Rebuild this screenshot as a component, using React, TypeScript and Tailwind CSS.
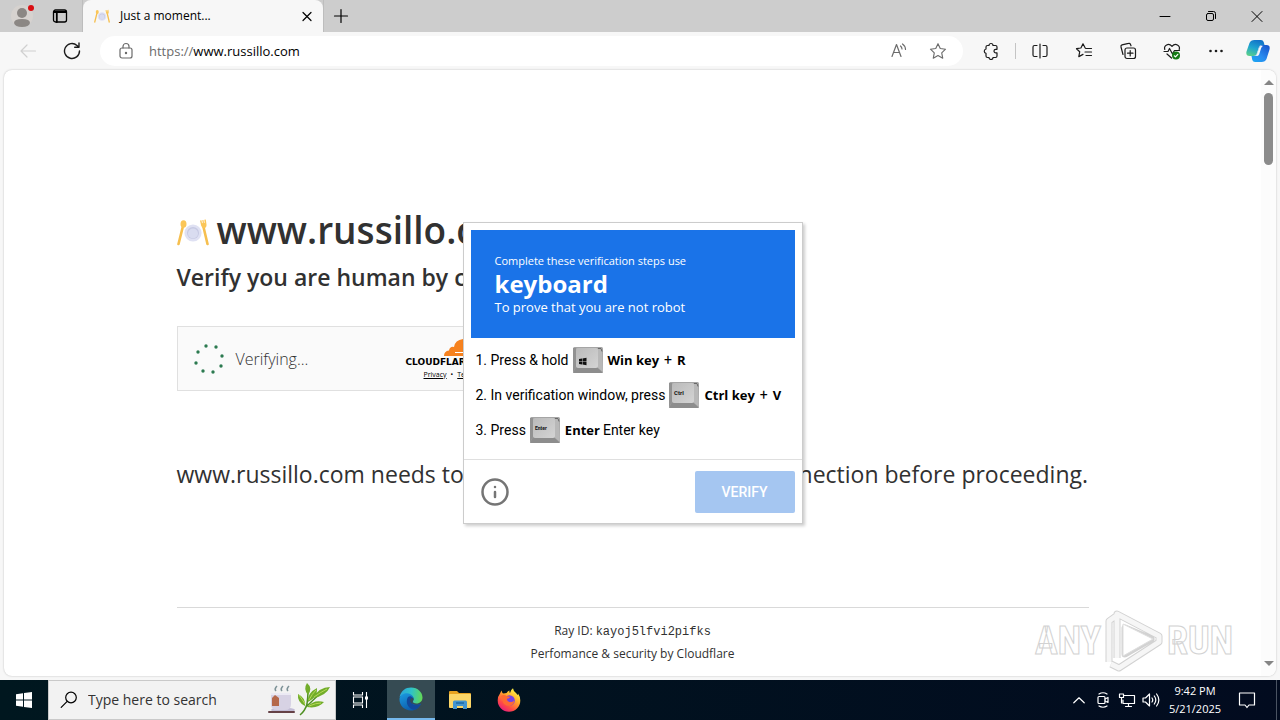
import type { ReactNode } from "react";
import { Info } from "lucide-react";

const stroke = {
  fill: "none",
  stroke: "currentColor",
  strokeWidth: 1.2,
  strokeLinecap: "round" as const,
  strokeLinejoin: "round" as const,
};

function IconButton({ label, className, children }: { label: string; className: string; children: ReactNode }) {
  return (
    <button type="button" aria-label={label} className={`flex shrink-0 items-center justify-center ${className}`}>
      {children}
    </button>
  );
}

function PlateIcon({ className }: { className: string }) {
  return (
    <svg viewBox="0 0 32 32" className={className} aria-hidden="true">
      <circle cx="16" cy="17" r="8.600" fill="#dfe1f3" />
      <circle cx="16" cy="17" r="6" fill="#c6c9e3" />
      <circle cx="16" cy="17.500" r="5" fill="#d9dcf0" />
      <path d="M6 10 1.500 28" stroke="#f6bf4f" strokeWidth="2.600" strokeLinecap="round" />
      <ellipse cx="6.500" cy="8" rx="3" ry="3.800" fill="#fbc658" />
      <path d="M26.500 11 30.500 28" stroke="#f6bf4f" strokeWidth="2.600" strokeLinecap="round" />
      <path d="m23 4.500 1.500-.3.5 3 .7-.1-.4-3 1.200-.2.500 3 .7-.1-.4-3 1.500-.3.700 5q.3 3-2.200 3.600-2.500.2-3.200-2.600Z" fill="#fbc658" />
    </svg>
  );
}

function TabStrip() {
  return (
    <div className="flex h-8 shrink-0 bg-[#cdcdcd]">
      <div className="flex w-[83px] shrink-0 items-center gap-1 border-r border-[#bdbdbd] pl-2">
        <IconButton label="Profile" className="h-7 w-8">
          <svg viewBox="0 0 32 28" className="h-7 w-8">
            <circle cx="14" cy="14" r="11" fill="#d6d2cf" />
            <circle cx="14" cy="11" r="5" fill="#8b8784" />
            <path d="M6 21q0-4 8-4t8 4q-1 4-8 4t-8-4Z" fill="#8b8784" />
            <circle cx="23" cy="6" r="3" fill="#d90e12" />
          </svg>
        </IconButton>
        <IconButton label="Tab actions" className="h-7 w-8">
          <svg viewBox="0 0 16 16" className="size-4" {...stroke} strokeWidth={1.3}>
            <rect x="1.500" y="2" width="13" height="12" rx="2" />
            <path d="M2 4h12M4.800 5v9" strokeWidth="1.800" />
          </svg>
        </IconButton>
      </div>
      <div className="flex w-60 shrink-0 items-center rounded-t-lg bg-[#f7f7f7] pr-2 pl-[11px]">
        <PlateIcon className="size-4" />
        <span className="ml-[10px] grow text-xs text-black">Just a moment...</span>
        <IconButton label="Close tab" className="size-4">
          <svg viewBox="0 0 16 16" className="size-4" {...stroke}>
            <path d="m4 4.500 8 8m0-8-8 8" />
          </svg>
        </IconButton>
      </div>
      <IconButton label="New tab" className="h-8 w-[34px] border-l border-[#bdbdbd]">
        <svg viewBox="0 0 16 16" className="size-4" {...stroke}>
          <path d="M1.500 8h13M8 1.500v13" />
        </svg>
      </IconButton>
      <div className="grow" />
      <IconButton label="Minimize" className="h-8 w-[46px]">
        <svg viewBox="0 0 12 12" className="size-3" {...stroke} strokeWidth={1}>
          <path d="M1 6.500h10" />
        </svg>
      </IconButton>
      <IconButton label="Restore" className="h-8 w-[46px]">
        <svg viewBox="0 0 12 12" className="size-3" {...stroke} strokeWidth={1}>
          <rect x="1.500" y="3.500" width="7" height="7" rx="1.500" />
          <path d="M3.500 1.500h5q2 0 2 2v5" />
        </svg>
      </IconButton>
      <IconButton label="Close" className="h-8 w-[46px]">
        <svg viewBox="0 0 12 12" className="size-3" {...stroke} strokeWidth={1}>
          <path d="m1 1.500 10 10m0-10-10 10" />
        </svg>
      </IconButton>
    </div>
  );
}

const starPath = "m8 1.500 2 4.300 4.700.6-3.400 3.300.9 4.700L8 12.100l-4.200 2.300.9-4.700L1.300 6.400 6 5.800Z";

function Toolbar() {
  return (
    <div className="flex h-[38px] shrink-0 items-center bg-[#f7f7f7] pl-[6px] text-[#1b1b1b]">
      <IconButton label="Back" className="h-8 w-11 text-[#d0d0d0]">
        <svg viewBox="0 0 18 18" className="size-[18px]" {...stroke}>
          <path d="M16.500 9H2M8 3 2 9l6 6" />
        </svg>
      </IconButton>
      <IconButton label="Refresh" className="h-8 w-11">
        <svg viewBox="0 0 18 18" className="size-[18px]" {...stroke} strokeWidth={1.4}>
          <path d="M16.500 9A7.500 7.500 0 1 1 14 3.400L15.800 5M16 1v4.300h-4.300" />
        </svg>
      </IconButton>
      <div className="ml-[6px] flex h-[30px] grow items-center rounded-full bg-white pr-4 pl-[18px] text-[#6b6b6b]">
        <svg viewBox="0 0 16 18" className="h-[18px] w-4 shrink-0" {...stroke}>
          <rect x="2" y="6" width="12" height="10" rx="2" />
          <path d="M5 6V4.500a3 3 0 0 1 6 0V6" />
          <circle cx="8" cy="11" r=".6" fill="currentColor" />
        </svg>
        <a href="https://www.russillo.com" className="ml-[15px] grow text-[13px] leading-5">
          https://<span className="text-black">www.russillo.com</span>
        </a>
        <IconButton label="Read aloud" className="size-[18px]">
          <svg viewBox="0 0 18 18" className="size-[18px]" {...stroke}>
            <path d="m2 14.500 4.500-12 4.500 12M3.500 10.500h6M10.500 4a4 4 0 0 1 1.500 3M12.500 2a7 7 0 0 1 3 5.500" />
          </svg>
        </IconButton>
        <IconButton label="Favorite" className="ml-[21px] size-[18px]">
          <svg viewBox="0 0 16 16" className="size-[18px]" {...stroke} strokeWidth={1}>
            <path d={starPath} />
          </svg>
        </IconButton>
      </div>
      <IconButton label="Extensions" className="ml-4 h-8 w-6">
        <svg viewBox="0 0 18 18" className="size-[18px]" {...stroke}>
          <path d="M5.500 3.500H7a2 2 0 0 1 4 0h2.500Q15 3.500 15 5v2.300h-1.200a1.800 1.800 0 0 0 0 3.600H15V14q0 1.500-1.500 1.500H11a2 2 0 0 1-4 0H5.500Q4 15.500 4 14v-2.700a2.200 2.200 0 0 1 0-4.300V5q0-1.500 1.500-1.500Z" />
        </svg>
      </IconButton>
      <div className="mr-2 ml-3 h-4 w-px bg-[#c4c4c4]" />
      <IconButton label="Split screen" className="h-8 w-8">
        <svg viewBox="0 0 18 18" className="size-[18px]" {...stroke}>
          <path d="M6 3.500H3.500q-1.500 0-1.500 1.500v8q0 1.500 1.500 1.500H6M12 3.500h2.500Q16 3.500 16 5v8q0 1.500-1.500 1.500H12M9 2v14" />
        </svg>
      </IconButton>
      <IconButton label="Favorites" className="ml-3 h-8 w-8">
        <svg viewBox="0 0 18 18" className="size-[18px]" {...stroke}>
          <path d="M10.200 6 8 1.800 5.900 6 1.500 6.700l3.200 3.100-.9 4.800 4.200-2.200M11 6.500h5.500M10 10h6.500M11 13.500h5.500" />
        </svg>
      </IconButton>
      <IconButton label="Collections" className="ml-3 h-8 w-8">
        <svg viewBox="0 0 18 18" className="size-[18px]" {...stroke}>
          <rect x="6" y="6" width="10.500" height="10.500" rx="2" />
          <path d="M11.200 8.500v5.500M8.500 11.200H14M4 12.500 2 5q-.4-1.600 1-2.100l6.500-1.500q1.500-.4 2 1l.5 1.400" />
        </svg>
      </IconButton>
      <IconButton label="Browser essentials" className="ml-3 h-8 w-8">
        <svg viewBox="0 0 18 18" className="size-[18px]" {...stroke}>
          <path d="M1.800 7.500C.5 3.500 5.500.5 9 4.300c3.500-3.800 8.500-.8 7.200 3.200M1 9.500h4l1.500-3 3 5.500 2-3.500h5M4 12l4.500 4" />
          <circle cx="13" cy="13.500" r="4" fill="#167a16" stroke="none" />
          <path d="m11.300 13.800 1.200 1.100 2.300-2.600" stroke="#fff" />
        </svg>
      </IconButton>
      <IconButton label="Settings and more" className="ml-3 h-8 w-8">
        <svg viewBox="0 0 18 18" className="size-[18px]">
          <g fill="currentColor">
            <circle cx="3.500" cy="9" r="1.300" />
            <circle cx="9" cy="9" r="1.300" />
            <circle cx="14.500" cy="9" r="1.300" />
          </g>
        </svg>
      </IconButton>
      <IconButton label="Copilot" className="mr-2 ml-3 h-8 w-7">
        <svg viewBox="0 0 24 24" className="size-6">
          <defs>
            <linearGradient id="cpA" x1="0.6" y1="0" x2="0.2" y2="1">
              <stop offset="0" stopColor="#1272c8" />
              <stop offset="0.5" stopColor="#1fa5d0" />
              <stop offset="1" stopColor="#5bd08a" />
            </linearGradient>
            <linearGradient id="cpB" x1="1" y1="0" x2="0.1" y2="1">
              <stop offset="0" stopColor="#164fc8" />
              <stop offset="0.6" stopColor="#2a8cf0" />
              <stop offset="1" stopColor="#1ba6f2" />
            </linearGradient>
          </defs>
          <path d="M8.500 1H15q2 0 2.700 2l.8 3h-2.800q-2 0-2.800 2.200L11 14q-.8 3-3.600 3H3.500Q-.5 17 .5 12.500L3.500 4Q4.700 1 8.500 1Z" fill="url(#cpA)" />
          <path d="M15.500 23H9q-2 0-2.700-2l-.8-4h2.800q2 0 2.800-2.200L13 9q.8-3 3.600-3h3.900q4 0 3 4.500l-3 9.500q-1.200 3-5 3Z" fill="url(#cpB)" />
          <path d="m13 9-2.200 6.500q-.6 1.500-2 1.500h2.400q1.300 0 2-1.800l2-6.200q.8-1.800 2-2-3.300-1-4.200 2Z" fill="#f7f7f7" />
        </svg>
      </IconButton>
    </div>
  );
}

function Key({ children }: { children: ReactNode }) {
  return (
    <svg viewBox="0 0 30 26" className="mr-[5px] ml-1 h-[26px] w-[30px] shrink-0" aria-hidden="true">
      <defs>
        <linearGradient id="keyTop" x1="0" y1="0" x2="1" y2="1">
          <stop offset="0" stopColor="#bababa" />
          <stop offset="1" stopColor="#d4d4d4" />
        </linearGradient>
      </defs>
      <rect width="30" height="26" rx="1.500" fill="#a5a5a5" />
      <path d="M0 26 3 20h21l6 6Z" fill="#8d8d8d" />
      <path d="m24 2 5-1 1 24-6-5Z" fill="#b8b8b8" />
      <path d="M0 1 3 1v19l-3 5Z" fill="#929292" />
      <rect x="3" y="1" width="22" height="20" rx="2" fill="url(#keyTop)" />
      <path d="M25 1.500h3l1 3" fill="none" stroke="#696969" />
      {children}
    </svg>
  );
}

function Strong({ children }: { children: ReactNode }) {
  return <b className="font-['Open_Sans',sans-serif] text-[13px] font-bold">{children}</b>;
}

function VerifyDialog() {
  return (
    <section
      role="dialog"
      aria-label="Verification steps"
      className="w-[340px] border border-[#cccccc] bg-white shadow-[2px_2px_3px_rgba(0,0,0,0.2)]"
    >
      <div className="m-[7px] mb-0 flex h-[108px] flex-col justify-center bg-[#1a73e8] px-6 text-white">
        <p className="text-[11px] leading-4">Complete these verification steps use</p>
        <p className="text-2xl leading-[30px] font-bold">keyboard</p>
        <p className="text-[13px] leading-4">To prove that you are not robot</p>
      </div>
      <ol className="flex flex-col gap-[9px] px-[12px] pt-[9px] pb-4 font-['Roboto',sans-serif] text-sm text-black">
        <li className="flex h-[26px] items-center">
          <span>1. Press &amp; hold</span>
          <Key>
            <path d="m6 12 3-.5v3H6Zm3.500-.6 4-.6v3.700h-4ZM6 15h3v2.500L6 17Zm3.500 0h4v3.200l-4-.6Z" fill="#111" />
          </Key>
          <Strong>Win key</Strong>
          <span className="mx-[5px]">+</span>
          <Strong>R</Strong>
        </li>
        <li className="flex h-[26px] items-center">
          <span>2. In verification window, press</span>
          <Key>
            <text x="5" y="13" fontSize="6" fontWeight="700" fill="#111">Ctrl</text>
          </Key>
          <Strong>Ctrl key</Strong>
          <span className="mx-[5px]">+</span>
          <Strong>V</Strong>
        </li>
        <li className="flex h-[26px] items-center">
          <span>3. Press</span>
          <Key>
            <text x="5" y="13" fontSize="5" fontWeight="700" fill="#111">Enter</text>
          </Key>
          <Strong>Enter</Strong>
          <span className="ml-[3px]">Enter key</span>
        </li>
      </ol>
      <div className="flex items-center justify-between border-t border-[#dfdfdf] pt-[11px] pr-[7px] pb-[10px] pl-4">
        <button type="button" aria-label="Information" className="text-[#757575]">
          <Info className="size-[30px]" strokeWidth={2} />
        </button>
        <button type="button" className="h-[42px] w-[100px] rounded-[2px] bg-[#a5c6f1] font-['Roboto',sans-serif] text-sm font-medium text-white">
          VERIFY
        </button>
      </div>
    </section>
  );
}

function Spinner() {
  const dots = [[12, 2], [22, 3], [28, 12], [27, 22], [19, 28], [9, 27], [2, 19], [4, 8]];
  return (
    <svg viewBox="0 0 30 30" className="size-[30px]" aria-hidden="true">
      {dots.map(([x, y]) => (
        <circle key={`${x}-${y}`} cx={x} cy={y} r="1.700" fill="#2c7a50" />
      ))}
    </svg>
  );
}

function Challenge() {
  return (
    <main className="mx-auto w-full max-w-[912px] pt-[135px] text-[#313131]">
      <h1 className="flex items-center gap-2 text-[37px] leading-[50px] font-semibold">
        <PlateIcon className="mt-1 size-8" />
        www.russillo.com
      </h1>
      <p className="mt-1 text-[23px] leading-9 font-semibold">Verify you are human by completing the action below.</p>
      <div className="mt-[31px] flex h-[65px] w-80 items-center border border-[#e0e0e0] bg-[#fafafa] pr-4 pl-4">
        <Spinner />
        <span className="ml-3 grow text-base font-light">Verifying...</span>
        <div className="flex w-[74px] flex-col items-start text-black">
          <svg viewBox="0 0 40 18" className="ml-[38px] h-[18px] w-10" aria-hidden="true">
            <path d="M0 17q0-5 5-5.500Q6 7 10 8q1-7 9-8 9 0 10 8l-2 9Z" fill="#f6821f" />
            <path d="M29 8q9-1 11 9H27Z" fill="#fbad41" />
            <path d="M11 13.500h14" stroke="#fff" />
          </svg>
          <span className="font-['DejaVu_Sans',sans-serif] text-[9px] leading-[10px] font-bold">CLOUDFLARE</span>
          <span className="mt-[3px] ml-[18px] flex gap-1 text-[7px] leading-[9px]">
            <a href="#privacy" className="underline">Privacy</a>•<a href="#terms" className="underline">Terms</a>
          </span>
        </div>
      </div>
      <p className="mt-[65px] text-[23px] leading-9">
        www.russillo.com needs to review the security of your connection before proceeding.
      </p>
      <footer className="mt-[115px] border-t border-[#d9d9d9] pt-3 text-center text-xs leading-[22px]">
        <p>
          Ray ID: <code className="font-['Liberation_Mono',monospace]">kayoj5lfvi2pifks</code>
        </p>
        <p>Perfomance &amp; security by Cloudflare</p>
      </footer>
    </main>
  );
}

function Watermark() {
  return (
    <div className="pointer-events-none absolute right-[43px] bottom-1 flex items-center gap-1 font-['Liberation_Sans_Narrow','Roboto_Condensed',sans-serif] text-[38px] leading-[62px] font-bold text-white [-webkit-text-stroke:1px_#d2d2d2]">
      <span>ANY</span>
      <svg viewBox="0 0 58 62" className="h-[62px] w-[58px]" fill="none" strokeLinejoin="round" aria-hidden="true">
        <g stroke="#d2d2d2" strokeWidth="7">
          <path d="M4 52V11l7-5M12 48V4l42 22v6L14 58l-8-4M20 18v26l26-15Z" />
        </g>
        <g stroke="#f6f6f6" strokeWidth="5">
          <path d="M4 52V11l7-5M12 48V4l42 22v6L14 58l-8-4" />
        </g>
        <path d="M18 14v32l30-17Z" fill="#fff" stroke="#dedede" />
      </svg>
      <span>RUN</span>
    </div>
  );
}

function Scrollbar() {
  return (
    <div className="flex w-[15px] shrink-0 flex-col items-center justify-between bg-[#fcfcfc] py-[10px]" aria-hidden="true">
      <div className="flex flex-col items-center gap-2">
        <svg viewBox="0 0 10 5" className="h-[5px] w-[10px]" fill="#858585">
          <path d="M0 5 5 0l5 5Z" />
        </svg>
        <div className="h-[72px] w-[9px] rounded-full bg-[#8b8b8b]" />
      </div>
      <svg viewBox="0 0 10 5" className="h-[5px] w-[10px]" fill="#858585">
        <path d="m0 0 5 5 5-5Z" />
      </svg>
    </div>
  );
}

function EdgeIcon() {
  return (
    <svg viewBox="0 0 24 24" className="size-6" aria-hidden="true">
      <defs>
        <linearGradient id="edA" x1="0" y1="0.3" x2="1" y2="0.4">
          <stop offset="0" stopColor="#2aa5dc" />
          <stop offset="0.5" stopColor="#2fc2c8" />
          <stop offset="1" stopColor="#62d957" />
        </linearGradient>
        <linearGradient id="edB" x1="0" y1="0" x2="0.6" y2="1">
          <stop offset="0" stopColor="#1b9de2" />
          <stop offset="1" stopColor="#0c58a8" />
        </linearGradient>
      </defs>
      <path d="M.6 10C2 3.800 6.500.5 12 .5 19 .5 23.500 5.600 23.500 10.500c0 3.600-2.600 6-6 6-2.500 0-4.200-1-3.400-2.500C16 11.500 13.500 8 9.500 8 5 8 1.500 9 .6 10Z" fill="url(#edA)" />
      <path d="M.5 12C.7 8.500 4 6 8 6.200c4.500.2 7.400 3.600 6.300 6.600-.5 1.200-1 1-1 2.400 0 2.200 3.500 3.700 8.700 1.500-1.800 4-5.500 6.800-10 6.800C5.500 23.500.2 18.500.5 12Z" fill="url(#edB)" />
      <path d="M8 12.500c.5-2.500 2.500-3.800 4.500-2.800 1.800 1 2.200 2.400 1.400 4-2.400 3.500 2.500 5.700 8 3-1.500 3.500-4.500 5.600-7 6-4.500-.5-8-5.200-6.900-10.200Z" fill="#12489b" />
      <path d="M12 11.500q2.500-1.500 2.300 1.200-1.800 2.800.2 4.300-2.700-.3-3.300-2.500-.3-2 .8-3Z" fill="#364b53" />
    </svg>
  );
}

function FolderIcon() {
  return (
    <svg viewBox="0 0 22 20" className="h-5 w-[22px]" aria-hidden="true">
      <path d="M0 2q0-1 1-1h7l2 2h11q1 0 1 1v4H0Z" fill="#e8a320" />
      <rect y="4" width="22" height="14" rx="1" fill="#fcd667" />
      <path d="M4 19v-7q0-1.500 1.500-1.500h11Q18 10.500 18 12v7h-4v-3H8v3Z" fill="#4495cf" />
      <path d="M7 12h8v2H7Z" fill="#2774ae" />
    </svg>
  );
}

function FirefoxIcon() {
  return (
    <svg viewBox="0 0 24 24" className="size-6" aria-hidden="true">
      <defs>
        <linearGradient id="ffA" x1="0.8" y1="0.1" x2="0.2" y2="1">
          <stop offset="0" stopColor="#fff044" />
          <stop offset="0.35" stopColor="#ffa62b" />
          <stop offset="0.7" stopColor="#ff4a45" />
          <stop offset="1" stopColor="#e31587" />
        </linearGradient>
      </defs>
      <path d="M3 5.500q1-2 1.500-3Q5 5 6.500 5.500 8 5 9.500 5 11 2.500 12.500 2.500q-.4 1.500.5 2.500 1-3.500 3-4.700.4 2.700 2.500 4.200Q20 5.500 20.300 7q.8-.1.700-1.500 2.300 3 2.300 7A11.300 11.300 0 0 1 .7 12.500Q.6 8.500 3 5.500Z" fill="url(#ffA)" />
      <circle cx="12.500" cy="12.500" r="5.300" fill="#7542e5" />
      <path d="M4 8q3-2 6 .2 2 .3 3 .5-.5 1.800-3 2-.4 2.300 2.500 3.300 3.500.5 4.500-1.500.5 4.500-4 5.500Q6 18 5.500 12Z" fill="#ff6a32" />
    </svg>
  );
}

function Taskbar() {
  return (
    <footer className="flex h-10 shrink-0 bg-linear-to-r from-[#00171f] to-[#020b1f] text-white">
      <IconButton label="Start" className="h-10 w-12">
        <svg viewBox="0 0 16 16" className="size-4" fill="#fff">
          <path d="m0 2.200 7-1V7.500H0ZM8 1l8-1v7.500H8ZM0 8.500h7v6.300l-7-1ZM8 8.500h8V16l-8-1Z" />
        </svg>
      </IconButton>
      <label className="flex w-72 shrink-0 items-center border border-[#c9c9c9] bg-[#f2f2f2] pr-1 pl-[11px] text-black">
        <svg viewBox="0 0 18 18" className="size-[18px] shrink-0" {...stroke}>
          <circle cx="11" cy="6.500" r="5.300" />
          <path d="m7.200 10.300-6 6" />
        </svg>
        <input
          type="text"
          aria-label="Search"
          placeholder="Type here to search"
          className="ml-[10px] w-0 min-w-0 grow bg-transparent text-sm text-black outline-none placeholder:text-[#333333]"
        />
        <svg viewBox="0 0 64 34" className="h-[34px] w-16 shrink-0" aria-hidden="true">
          <path d="M9 8q-2-2 1-5M15 8q-2-2 1-5M21 8q-2-2 1-5" fill="none" stroke="#7d9297" strokeWidth="1.600" />
          <ellipse cx="16" cy="27" rx="12" ry="2.500" fill="#c3bdd6" />
          <path d="M4 10h20v11q0 6-6 6h-8q-6 0-6-6Z" fill="#d7d2e4" />
          <path d="M4 10h20v2H4Z" fill="#eceaf4" />
          <path d="M5 15l3-3 4 3v8H5Z" fill="#b5684b" />
          <rect x="1" y="28" width="27" height="2" rx="1" fill="#654146" />
          <path d="M33 32q5-4 7-11 1-8 1-13M39 24q9-9 17-16" fill="none" stroke="#4f8f22" strokeWidth="1.500" />
          <path d="M41 12q-5-6-1-12 6 5 1 12ZM38 23q-8-4-7-12 8 4 7 12ZM41 19q-1-9 9-14 1 9-9 14ZM46 15q6-11 17-11-4 9-17 11ZM40 24q7-8 17-5-6 7-17 5Z" fill="#72ad2a" />
          <path d="M38 21q-3-5-6-9M42 17q3-6 7-10M47 14q7-5 13-8M42 23q7-3 12-3" fill="none" stroke="#b7da56" />
        </svg>
      </label>
      <IconButton label="Task view" className="h-10 w-[51px] pr-[3px]">
        <svg viewBox="0 0 18 18" className="size-[18px]" fill="none" stroke="#fff" strokeWidth="1.100">
          <path d="M2.500 1v3h9V1M2.500 17v-3h9v3M2.500 6h9v6h-9ZM15.500 1v16" />
          <path d="M14 5.500h3v3h-3Z" fill="#fff" stroke="none" />
        </svg>
      </IconButton>
      <IconButton label="Microsoft Edge" className="h-10 w-12 border-b-2 border-[#76b9ed] bg-[#364b53]">
        <EdgeIcon />
      </IconButton>
      <IconButton label="File Explorer" className="h-10 w-[50px]">
        <FolderIcon />
      </IconButton>
      <IconButton label="Firefox" className="h-10 w-12">
        <FirefoxIcon />
      </IconButton>
      <div className="grow" />
      <IconButton label="Show hidden icons" className="h-10 w-6">
        <svg viewBox="0 0 12 8" className="h-2 w-3" {...stroke}>
          <path d="m.8 6.800 5.200-5 5.200 5" />
        </svg>
      </IconButton>
      <IconButton label="Meet now" className="h-10 w-6">
        <svg viewBox="0 0 16 18" className="h-[18px] w-4" {...stroke}>
          <rect x="3" y="5.500" width="7" height="7" rx="1" />
          <path d="m10 8 3-1.500v5L10 10M4 3q4-2.500 8 0M4 15q4 2.500 8 0" />
        </svg>
      </IconButton>
      <IconButton label="Network" className="h-10 w-6">
        <svg viewBox="0 0 18 16" className="h-4 w-[18px]" {...stroke}>
          <path d="M6 3.500h10.500v8H5V8M7.500 14.500h6M10.500 11.500v3M1.500 2v3.500h4V2ZM3.500 5.500V11" />
        </svg>
      </IconButton>
      <IconButton label="Volume" className="h-10 w-6">
        <svg viewBox="0 0 18 16" className="h-4 w-[18px]" {...stroke}>
          <path d="M1 6h2.500l4-4v12l-4-4H1ZM10 6q1.500 2 0 4M12.300 4q3 4 0 8M14.600 2q4.500 6 0 12" />
        </svg>
      </IconButton>
      <div className="flex w-16 shrink-0 flex-col justify-center text-center text-[11px] leading-[18px]">
        <time>9:42 PM</time>
        <time>5/21/2025</time>
      </div>
      <IconButton label="Notifications" className="h-10 w-10">
        <svg viewBox="0 0 18 18" className="size-[18px]" {...stroke}>
          <path d="M1.500 2h15v12H11l-2 2.500L7 14H1.500Z" />
        </svg>
      </IconButton>
      <div className="ml-[9px] w-1 border-l border-[#4a5362]" />
    </footer>
  );
}

export default function App() {
  return (
    <div className="flex h-screen flex-col overflow-hidden bg-[#f7f7f7] font-['Open_Sans','Noto_Sans',sans-serif]">
      <TabStrip />
      <Toolbar />
      <div className="relative mx-1 mb-1 flex min-h-0 grow overflow-hidden rounded-lg bg-white shadow-[0_0_2px_rgba(0,0,0,0.25)]">
        <div className="relative min-w-0 grow overflow-hidden">
          <Challenge />
          <div className="absolute inset-0 flex items-center justify-center">
            <VerifyDialog />
          </div>
        </div>
        <Scrollbar />
        <Watermark />
      </div>
      <Taskbar />
    </div>
  );
}
